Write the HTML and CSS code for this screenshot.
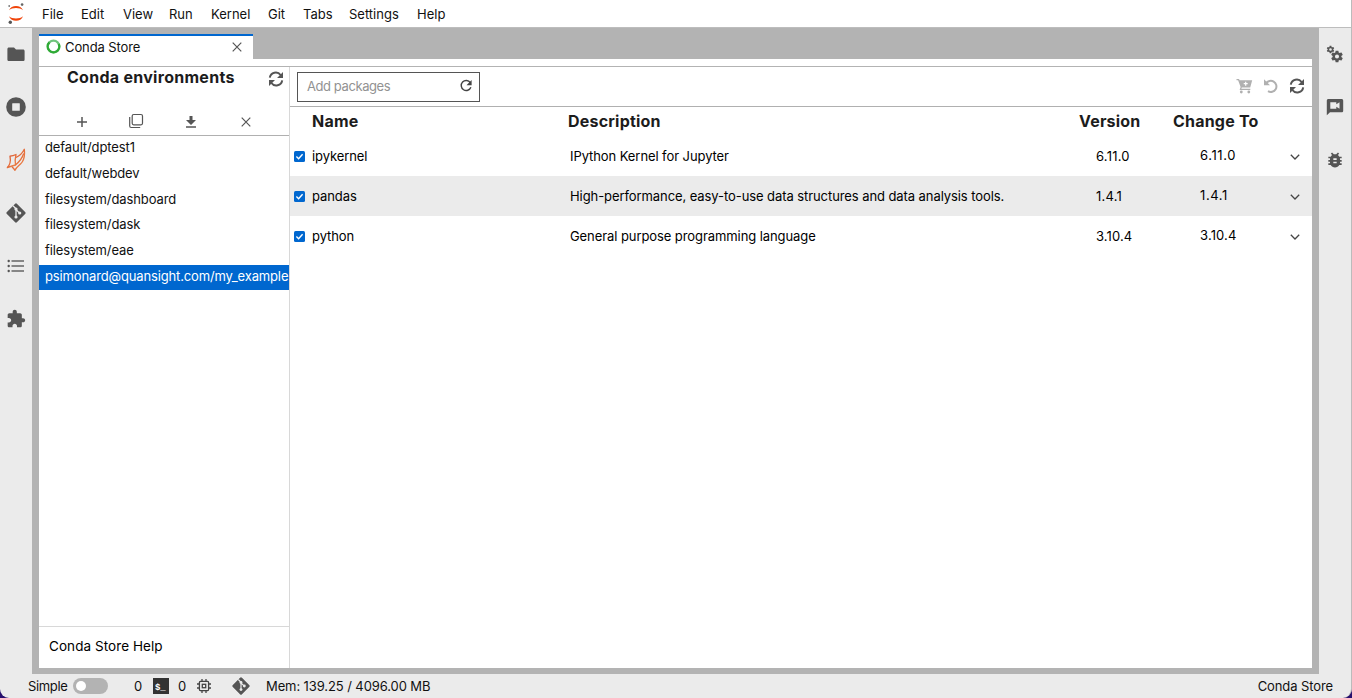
FILE: index.html
```html
<!DOCTYPE html>
<html lang="en">
<head>
<meta charset="utf-8">
<title>JupyterLab - Conda Store</title>
<link rel="stylesheet" href="styles.css">
</head>
<body>
<svg class="defs" width="0" height="0">
  <symbol id="sync" viewBox="0 0 16 16"><path d="M1.800 6.600A6 6 0 0 1 12.600 4M14.200 9.400A6 6 0 0 1 3.400 12" fill="none" stroke="currentColor" stroke-width="2"/><path d="M15 1v6H9zM1 15V9h6z" fill="currentColor"/></symbol>
  <symbol id="close" viewBox="0 0 10 10"><path d="M.7.7l8.600 8.600M9.300.7L.7 9.300" fill="none" stroke="currentColor" stroke-width="1.200"/></symbol>
  <symbol id="git" viewBox="0 0 20 20"><path d="M8.900.9a1.550 1.550 0 0 1 2.200 0l8 8a1.550 1.550 0 0 1 0 2.200l-8 8a1.550 1.550 0 0 1-2.200 0l-8-8a1.550 1.550 0 0 1 0-2.200z" fill="#555"/><path d="M7 2.800l3 3v8.500M10 6.500l3.600 3.600" fill="none" stroke="#ebebeb" stroke-width="1.300"/><circle cx="10" cy="6" r="1.600" fill="#ebebeb"/><circle cx="10" cy="14" r="1.600" fill="#ebebeb"/><circle cx="13.700" cy="10" r="1.600" fill="#ebebeb"/></symbol>
  <symbol id="gear" viewBox="0 0 24 24"><path fill="#555" fill-rule="evenodd" d="M19.430 12.980c.04-.32.07-.64.07-.98s-.03-.66-.07-.98l2.110-1.650c.19-.15.24-.42.12-.64l-2-3.460c-.12-.22-.39-.3-.61-.22l-2.490 1c-.52-.4-1.080-.73-1.690-.98l-.38-2.650C14.460 2.180 14.250 2 14 2h-4c-.25 0-.46.18-.49.42l-.38 2.650c-.61.25-1.170.59-1.690.98l-2.490-1c-.23-.09-.49 0-.61.22l-2 3.460c-.13.22-.07.49.12.64l2.110 1.650c-.04.32-.07.65-.07.98s.03.66.07.98l-2.110 1.650c-.19.15-.24.42-.12.64l2 3.460c.12.22.39.3.61.22l2.490-1c.52.4 1.080.73 1.690.98l.38 2.650c.03.24.24.42.49.42h4c.25 0 .46-.18.49-.42l.38-2.650c.61-.25 1.170-.59 1.690-.98l2.490 1c.23.09.49 0 .61-.22l2-3.460c.12-.22.07-.49-.12-.64zM12 15.500a3.500 3.500 0 1 1 0-7 3.500 3.500 0 0 1 0 7z"/></symbol>
  <symbol id="check" viewBox="0 0 11 11"><rect width="11" height="11" rx="1.500" fill="#0067cf"/><path d="M2.400 5.600l2.200 2.200 4-4.500" fill="none" stroke="#fff" stroke-width="1.400"/></symbol>
  <symbol id="chevron" viewBox="0 0 10 6"><path d="M.8.8L5 5 9.200.8" fill="none" stroke="#444" stroke-width="1.300"/></symbol>
</svg>
<div class="app">
  <header class="menubar">
    <svg class="logo" width="18" height="22" viewBox="0 0 18 22"><path d="M2 8.300C4 2.400 14 2.400 16 8.300 13 5.200 5 5.200 2 8.300zM2 14.200c2 6 12 6 14 0-3 3-11 3-14 0z" fill="#f0440a"/><circle cx="15.100" cy="2.600" r="1.300" fill="#666"/><circle cx="3.300" cy="20.200" r="1.700" fill="#555"/><circle cx="2.200" cy="4" r=".9" fill="#777"/></svg>
    <nav class="menu"><span>File</span><span>Edit</span><span>View</span><span>Run</span><span>Kernel</span><span>Git</span><span>Tabs</span><span>Settings</span><span>Help</span></nav>
  </header>
  <div class="body">
    <aside class="side left">
      <svg width="18" height="18" viewBox="0 0 18 18"><path d="M2 2.500h5l2 2h7c1 0 1.600.6 1.600 1.500v8.500c0 1-.6 1.500-1.600 1.500H2c-1 0-1.600-.5-1.600-1.500V4c0-.9.6-1.500 1.600-1.500z" fill="#555"/></svg>
      <svg width="20" height="20" viewBox="0 0 20 20"><circle cx="10" cy="10" r="9.800" fill="#555"/><rect x="6.200" y="6.200" width="7.600" height="7.600" rx=".5" fill="#ebebeb"/></svg>
      <svg width="20" height="24" viewBox="0 0 20 24"><defs><linearGradient id="flame" x1="0" y1="0" x2="1" y2="1"><stop offset="0" stop-color="#d9502c"/><stop offset="1" stop-color="#ef8a4b"/></linearGradient></defs><g fill="none" stroke="url(#flame)" stroke-width="1.300" stroke-linejoin="round"><path d="M10 6.500C8 7.500 6 8 4 8.200 4.800 12.500 4 17 1.300 19.700c3.200-1.300 5.500-2 8.200-2.700-.5-3-.5-6.500.5-10.500z"/><path d="M10 9.500C13.500 8 16.500 5 18.300 1.300c.7 6 .2 11-3.800 14.700-2.300 2.100-4.500 3.500-5.500 6.300-.8-1.300-1.800-2.300-3-3.600"/><path d="M9.400 17C12.500 14.500 16 11 17.700 5.500"/></g></svg>
      <svg width="20" height="20"><use href="#git"/></svg>
      <svg width="18" height="14" viewBox="0 0 18 14"><path d="M4.500 2h12.500M4.500 7h12.500M4.500 12h12.500" stroke="#666" stroke-width="1.400"/><g fill="#555"><circle cx="1.700" cy="2" r="1.200"/><circle cx="1.700" cy="7" r="1.200"/><circle cx="1.700" cy="12" r="1.200"/></g></svg>
      <svg width="20" height="20" viewBox="0 0 24 24"><path fill="#555" d="M20.500 11H19V7c0-1.100-.9-2-2-2h-4V3.500C13 2.120 11.880 1 10.500 1S8 2.120 8 3.500V5H4c-1.100 0-1.990.9-1.990 2v3.800H3.500c1.490 0 2.700 1.210 2.700 2.700s-1.210 2.700-2.700 2.700H2V20c0 1.100.9 2 2 2h3.800v-1.500c0-1.490 1.210-2.700 2.700-2.700 1.490 0 2.700 1.210 2.700 2.700V22H17c1.100 0 2-.9 2-2v-4h1.500c1.380 0 2.500-1.120 2.500-2.500S21.880 11 20.500 11z"/></svg>
    </aside>
    <main class="dock">
      <div class="tab">
        <svg class="spin" width="15" height="15" viewBox="0 0 15 15"><circle cx="7.500" cy="7.500" r="5.800" fill="none" stroke="#70c47c" stroke-width="2.200"/><path d="M3.400 3.400A5.800 5.800 0 1 0 12.700 4.900" fill="none" stroke="#2faa35" stroke-width="2.300"/></svg>
        <span class="tabname">Conda Store</span>
        <svg class="tabclose" width="10" height="10"><use href="#close"/></svg>
      </div>
      <div class="gap"></div>
      <div class="content">
        <section class="envs">
          <div class="envhead">
            <div class="envtitle"><h2>Conda environments</h2><svg width="16" height="16"><use href="#sync"/></svg></div>
            <div class="envtools">
              <svg width="12" height="12" viewBox="0 0 12 12"><path d="M6 1v10M1 6h10" stroke="#555" stroke-width="1.500"/></svg>
              <svg class="copy" width="16" height="16" viewBox="0 0 16 16"><rect x="4.200" y="1.500" width="10.300" height="10.300" rx="1.500" fill="none" stroke="#555" stroke-width="1.200"/><path d="M1.700 4v9c0 .9.6 1.500 1.500 1.500h9" fill="none" stroke="#555" stroke-width="1.200"/></svg>
              <svg width="12" height="14" viewBox="0 0 12 14"><path d="M4.500 1h3v4H11l-5 5-5-5h3.500zM1 11.300h10v1.400H1z" fill="#555"/></svg>
              <svg width="10" height="10"><use href="#close"/></svg>
            </div>
          </div>
          <div class="list"><div>default/dptest1</div><div>default/webdev</div><div>filesystem/dashboard</div><div>filesystem/dask</div><div>filesystem/eae</div><div class="selected">psimonard@quansight.com/my_example</div></div>
          <div class="help">Conda Store Help</div>
        </section>
        <section class="packages">
          <div class="toolbar">
            <div class="search"><span>Add packages</span><svg width="14" height="14" viewBox="0 0 14 14"><path d="M11.300 3.600A5 5 0 1 0 11.900 8.300" fill="none" stroke="#444" stroke-width="1.400"/><path d="M12.600 1.100v5.100H7.500z" fill="#444"/></svg></div>
            <div class="actions">
              <svg width="17" height="16" viewBox="0 0 17 16"><path fill="#b0b0b0" d="M.5 1H3l.6 1.300h12.600l-2 7.200H5.800l-.5 1.200h9V12H3.600l1-2.900L2.100 2.300H.5z"/><path d="M9.700 3.700v4M7.700 5.700h4" stroke="#fff" stroke-width="1.200"/><circle cx="5.300" cy="14" r="1.400" fill="#b0b0b0"/><circle cx="12.800" cy="14" r="1.400" fill="#b0b0b0"/></svg>
              <svg width="16" height="16" viewBox="0 0 16 16"><path d="M3 5.500A5.600 5.600 0 1 1 5 13.200" fill="none" stroke="#b0b0b0" stroke-width="2"/><path d="M1 1.300V7.200H7z" fill="#b0b0b0"/></svg>
              <svg width="16" height="16"><use href="#sync"/></svg>
            </div>
          </div>
          <div class="row head"><i></i><b>Name</b><b class="dh">Description</b><b class="vh">Version</b><b class="ch">Change To</b><i></i></div>
          <div class="row"><svg width="11" height="11"><use href="#check"/></svg><span>ipykernel</span><span>IPython Kernel for Jupyter</span><span class="ver">6.11.0</span><span class="to">6.11.0</span><svg class="chev" width="10" height="6"><use href="#chevron"/></svg></div>
          <div class="row alt"><svg width="11" height="11"><use href="#check"/></svg><span>pandas</span><span>High-performance, easy-to-use data structures and data analysis tools.</span><span class="ver">1.4.1</span><span class="to">1.4.1</span><svg class="chev" width="10" height="6"><use href="#chevron"/></svg></div>
          <div class="row"><svg width="11" height="11"><use href="#check"/></svg><span>python</span><span>General purpose programming language</span><span class="ver last">3.10.4</span><span class="to last">3.10.4</span><svg class="chev" width="10" height="6"><use href="#chevron"/></svg></div>
        </section>
      </div>
    </main>
    <aside class="side right">
      <svg width="18" height="20" viewBox="0 0 18 20"><use href="#gear" x="0" y="1" width="9" height="9"/><use href="#gear" x="4" y="5.500" width="14" height="14"/></svg>
      <svg width="18" height="18" viewBox="0 0 18 18"><path d="M2.500 1h13c1 0 1.700.7 1.700 1.700v10c0 1-.7 1.500-1.700 1.500H4L.8 17.200V2.700C.8 1.700 1.500 1 2.500 1z" fill="#555"/><path d="M4.300 4.300h6v2l3.200-2v6.400l-3.200-2v2h-6z" fill="#ebebeb"/></svg>
      <svg width="20" height="20" viewBox="0 0 24 24"><path fill="#555" d="M20 8h-2.810c-.45-.78-1.070-1.450-1.820-1.960L17 4.410 15.590 3l-2.170 2.170C12.960 5.060 12.490 5 12 5s-.96.06-1.410.17L8.410 3 7 4.410l1.620 1.630C7.880 6.550 7.260 7.220 6.810 8H4v2h2.090c-.05.33-.09.66-.09 1v1H4v2h2v1c0 .34.04.67.09 1H4v2h2.810c1.040 1.790 2.970 3 5.190 3s4.150-1.210 5.190-3H20v-2h-2.090c.05-.33.09-.66.09-1v-1h2v-2h-2v-1c0-.34-.04-.67-.09-1H20V8zm-6 8h-4v-2h4v2zm0-4h-4v-2h4v2z"/></svg>
    </aside>
  </div>
  <footer class="status">
    <span class="simple">Simple</span><span class="switch"></span><span class="n1">0</span>
    <svg class="term" width="16" height="16" viewBox="0 0 16 16"><rect width="16" height="16" fill="#333"/><text x="2" y="11.500" class="prompt">$_</text></svg>
    <span class="n2">0</span>
    <svg class="chip" width="14" height="14" viewBox="0 0 14 14"><g fill="none" stroke="#444" stroke-width="1.300"><rect x="2.400" y="2.400" width="9.200" height="9.200" rx="1"/><path d="M5 0v2.400M9 0v2.400M5 11.600V14M9 11.600V14M0 5h2.400M0 9h2.400M11.600 5H14M11.600 9H14"/><rect x="5.300" y="5.300" width="3.400" height="3.400"/></g></svg>
    <svg class="sgit" width="18" height="18"><use href="#git"/></svg>
    <span class="mem">Mem: 139.25 / 4096.00 MB</span><span class="current">Conda Store</span>
  </footer>
</div>
</body>
</html>
```
FILE: styles.css
```css
* { box-sizing: border-box; }
body { margin: 0; font: 13px/16px Inter, "Liberation Sans", sans-serif; color: #111; background: #28106e; overflow: hidden; }
svg { display: block; flex: none; color: #555; }
.defs { position: absolute; }
.app { width: 1352px; height: 698px; display: flex; flex-direction: column; background: #ebebeb; border-right: 1px solid #bbb; border-radius: 0 0 9px 9px; overflow: hidden; }
.menubar { height: 28px; flex: none; display: flex; background: #fff; border-bottom: 1px solid #bdbdbd; }
.logo { margin: 2px 17px 0 7px; }
.menu { display: grid; grid-template-columns: 39px 42px 46px 42px 57px 35px 46px 68px 40px; padding-top: 6px; }
.body { height: 646px; display: flex; flex: none; }
.side { width: 32px; flex: none; display: grid; grid-auto-rows: 53px; place-items: center; align-content: start; margin-top: -1px; }
.dock { flex: 1; background: #b3b3b3; padding: 6px 7px; display: flex; flex-direction: column; }
.tab { width: 214px; height: 25px; background: #fff; border-top: 2px solid #0067cf; display: flex; align-items: center; padding: 0 11px 0 7px; }
.spin { margin: -3px 4px 0 0; }
.tabname { flex: 1; padding-bottom: 1px; letter-spacing: -.1px; }
.tabclose { margin-top: -1px; }
.gap { height: 8px; background: #fff; border-bottom: 1px solid #b3b3b3; }
.content { flex: 1; min-height: 0; background: #fff; display: flex; }
.envs { width: 251px; flex: none; border-right: 1px solid #d8d8d8; display: flex; flex-direction: column; }
.envhead { height: 69px; border-bottom: 1px solid #b0b0b0; }
.envtitle { display: flex; height: 24px; padding: 0 5px 0 28px; justify-content: space-between; align-items: center; }
h2, b { margin: 0; font-size: 16px; line-height: 20px; font-weight: 700; color: #1c1c1c; letter-spacing: .2px; }
h2 { padding-bottom: 4px; letter-spacing: .28px; white-space: nowrap; }
.envtools { display: grid; grid-template-columns: repeat(4, 54.700px); justify-content: center; justify-items: center; align-items: center; height: 20px; margin-top: 21px; }
.copy { margin: -2px 2px 0 0; }
.list { flex: 1; line-height: 22.500px; letter-spacing: -.1px; }
.list div { height: 25.800px; padding-left: 6px; white-space: nowrap; overflow: hidden; }
.list .selected { height: 25px; background: #0067cf; color: #fff; letter-spacing: -.14px; }
.help { height: 42px; border-top: 1px solid #d8d8d8; padding: 11px 10px; color: #000; font-size: 13.500px; letter-spacing: .07px; }
.packages { flex: 1; min-width: 0; }
.toolbar { height: 40px; border-bottom: 1px solid #b0b0b0; display: flex; align-items: center; justify-content: space-between; padding: 0 7px 1px; }
.search { width: 183px; height: 30px; margin-top: 1px; border: 1px solid #555; display: flex; align-items: center; justify-content: space-between; padding: 0 6px 1px 9px; color: #929292; letter-spacing: -.42px; }
.actions { display: flex; gap: 10px; }
.row { height: 40px; display: grid; grid-template-columns: 18px 258px 526px 104px 90px 20px; padding-left: 4px; align-items: center; color: #000; letter-spacing: -.08px; }
.head { height: 29px; padding-bottom: 2px; }
.alt { background: #ebebeb; }
.dh { margin-left: -2px; }
.vh { margin-left: -17px; }
.ch { margin-left: -27px; }
.ver { letter-spacing: .22px; }
.to { padding-bottom: 2px; letter-spacing: .6px; }
.ver.last { letter-spacing: .1px; }
.to.last { letter-spacing: .15px; }
.chev { margin-top: 1px; }
.status { height: 24px; display: flex; align-items: center; padding: 0 18px 0 28px; letter-spacing: -.1px; }
.switch { width: 35px; height: 16px; border-radius: 8px; background: #b3b3b3; margin: 0 26px 0 6px; padding: 3px; }
.switch::before { content: ""; display: block; width: 10px; height: 10px; border-radius: 50%; background: #fff; }
.simple { width: 39px; letter-spacing: -.35px; }
.n1 { width: 19px; }
.prompt { font: bold 9px "Liberation Mono", monospace; fill: #fff; }
.n2 { width: 19px; margin-left: 9px; }
.sgit { margin: 0 16px 0 21px; }
.mem { flex: 1; }
```
